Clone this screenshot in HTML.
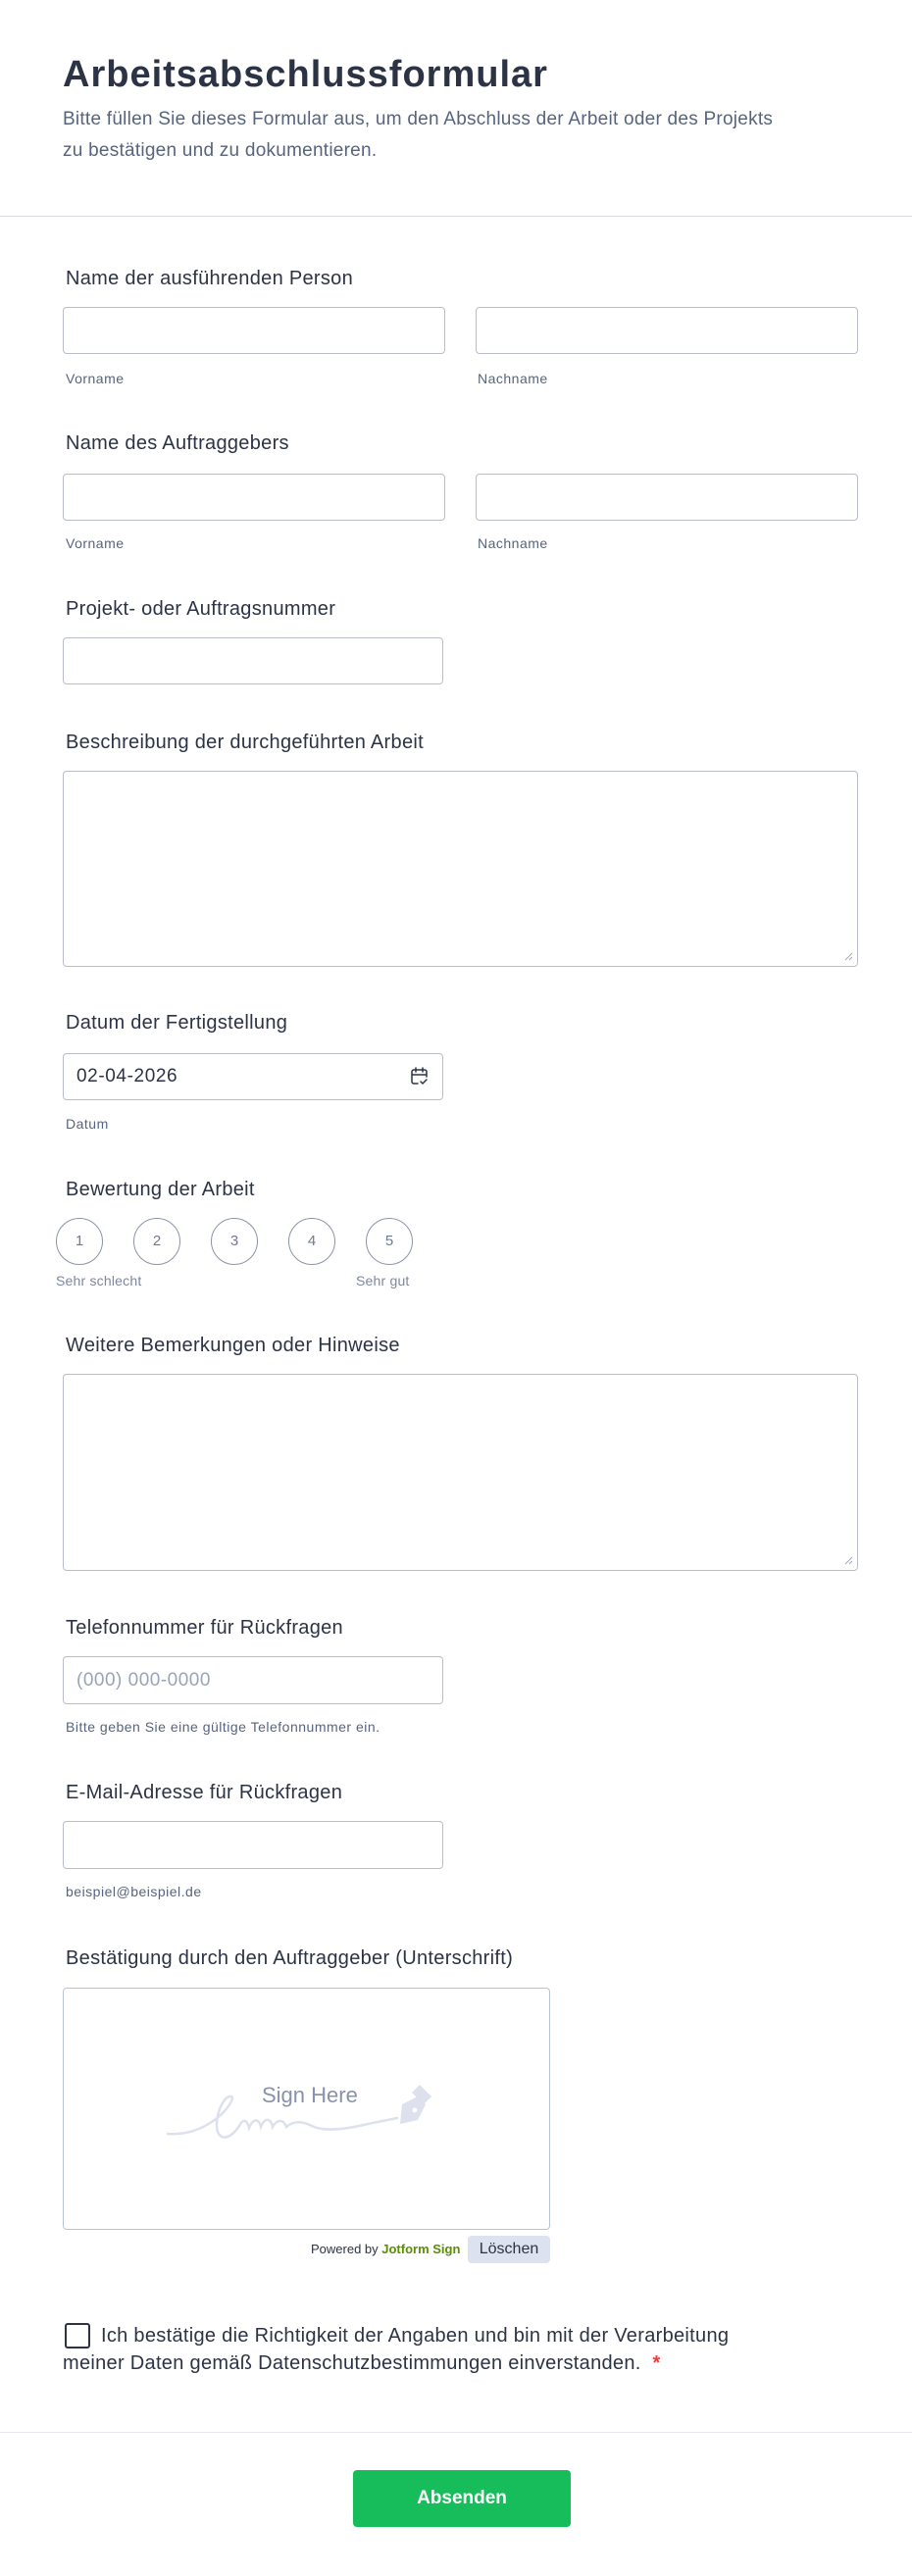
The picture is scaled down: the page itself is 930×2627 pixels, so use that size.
<!DOCTYPE html>
<html><head><meta charset="utf-8"><style>
*{box-sizing:border-box;margin:0;padding:0}
body{width:930px;height:2627px;background:#fff;font-family:"Liberation Sans",Arial,sans-serif;color:#2c3345;position:relative;overflow:hidden}
.a{position:absolute;white-space:nowrap}
.t{left:64px;font-size:38px;font-weight:700;letter-spacing:1px}
.sub{left:64px;font-size:19px;color:#57647e;line-height:32px;letter-spacing:0.25px}
.lbl{left:67px;font-size:20px;letter-spacing:0.3px;line-height:24px}
.sl{font-size:14px;color:#57647e;letter-spacing:0.5px;line-height:18px}
.in{position:absolute;border:1px solid #b8bdc9;border-radius:4px;background:#fff}
.c{position:absolute;width:48px;height:48px;border:1px solid #8c94aa;border-radius:50%;font-size:15px;color:#6f7a94;text-align:center;line-height:46px;top:1242px}
.hr{position:absolute;left:0;width:930px;height:1px;background:#d8dbe3}
</style></head><body>
<div class="a t" style="top:52px;line-height:48px">Arbeitsabschlussformular</div>
<div class="a sub" style="top:106px">Bitte füllen Sie dieses Formular aus, um den Abschluss der Arbeit oder des Projekts</div>
<div class="a sub" style="top:138px">zu bestätigen und zu dokumentieren.</div>
<div class="hr" style="top:220px"></div>

<div class="a lbl" style="top:272px">Name der ausführenden Person</div>
<div class="in" style="left:64px;top:313px;width:390px;height:48px"></div>
<div class="in" style="left:485px;top:313px;width:390px;height:48px"></div>
<div class="a sl" style="left:67px;top:377px">Vorname</div>
<div class="a sl" style="left:487px;top:377px">Nachname</div>

<div class="a lbl" style="top:440px">Name des Auftraggebers</div>
<div class="in" style="left:64px;top:483px;width:390px;height:48px"></div>
<div class="in" style="left:485px;top:483px;width:390px;height:48px"></div>
<div class="a sl" style="left:67px;top:545px">Vorname</div>
<div class="a sl" style="left:487px;top:545px">Nachname</div>

<div class="a lbl" style="top:609px">Projekt- oder Auftragsnummer</div>
<div class="in" style="left:64px;top:650px;width:388px;height:48px"></div>

<div class="a lbl" style="top:745px">Beschreibung der durchgeführten Arbeit</div>
<div class="in" style="left:64px;top:786px;width:811px;height:200px"></div>
<svg class="a" style="left:860px;top:970px" width="10" height="10"><path d="M9 2L2 9M9 6L6 9" stroke="#aab" stroke-width="1"/></svg>

<div class="a lbl" style="top:1031px">Datum der Fertigstellung</div>
<div class="in" style="left:64px;top:1074px;width:388px;height:48px"></div>
<div class="a" style="left:78px;top:1086px;font-size:19px;letter-spacing:0.6px;line-height:24px">02-04-2026</div>
<svg class="a" style="left:417px;top:1087px" width="22" height="22" viewBox="0 0 22 22" fill="none" stroke="#2c3345" stroke-width="1.5" stroke-linecap="round"><path d="M9 18H5a2 2 0 0 1-2-2V6a2 2 0 0 1 2-2h11a2 2 0 0 1 2 2v5M3 9h15M7 2v4M14 2v4M12 16l2 2 4-4"/></svg>
<div class="a sl" style="left:67px;top:1137px">Datum</div>

<div class="a lbl" style="top:1201px">Bewertung der Arbeit</div>
<div class="c" style="left:57px">1</div>
<div class="c" style="left:136px">2</div>
<div class="c" style="left:215px">3</div>
<div class="c" style="left:294px">4</div>
<div class="c" style="left:373px">5</div>
<div class="a sl" style="left:57px;top:1297px;color:#7d879e;letter-spacing:0.2px">Sehr schlecht</div>
<div class="a sl" style="left:363px;top:1297px;color:#7d879e;letter-spacing:0.2px">Sehr gut</div>

<div class="a lbl" style="top:1360px">Weitere Bemerkungen oder Hinweise</div>
<div class="in" style="left:64px;top:1401px;width:811px;height:201px"></div>
<svg class="a" style="left:860px;top:1586px" width="10" height="10"><path d="M9 2L2 9M9 6L6 9" stroke="#aab" stroke-width="1"/></svg>

<div class="a lbl" style="top:1648px">Telefonnummer für Rückfragen</div>
<div class="in" style="left:64px;top:1689px;width:388px;height:49px"></div>
<div class="a" style="left:78px;top:1702px;font-size:19px;letter-spacing:0.5px;color:#9aa3b8;line-height:24px">(000) 000-0000</div>
<div class="a sl" style="left:67px;top:1752px">Bitte geben Sie eine gültige Telefonnummer ein.</div>

<div class="a lbl" style="top:1816px">E-Mail-Adresse für Rückfragen</div>
<div class="in" style="left:64px;top:1857px;width:388px;height:49px"></div>
<div class="a sl" style="left:67px;top:1920px">beispiel@beispiel.de</div>

<div class="a lbl" style="top:1985px">Bestätigung durch den Auftraggeber (Unterschrift)</div>
<div class="in" style="left:64px;top:2027px;width:497px;height:247px;border-color:#b8c3da"></div>
<div class="a" style="left:267px;top:2124px;font-size:22px;color:#8992ab;line-height:26px">Sign Here</div>
<svg class="a" style="left:160px;top:2120px" width="300" height="70" viewBox="160 2120 300 70" fill="none" stroke="#dde1ee" stroke-width="2.5" stroke-linecap="round">
<path d="M171 2176C195 2178 215 2167 228 2154C236 2145 240 2137 234 2138C226 2140 218 2162 222 2174C226 2184 236 2180 244 2168C248 2160 252 2162 254 2170C258 2160 264 2160 266 2169C270 2159 276 2160 278 2169C283 2160 290 2162 292 2169C300 2162 310 2164 318 2168C330 2174 350 2172 375 2166L405 2160"/>
<path d="M420 2134l8 -8 12 12-8 8zM410 2146l16 -8 8 8-8 16-18 4z" fill="#dde1ee" stroke="none"/>
<circle cx="423" cy="2152" r="2.5" fill="#fff" stroke="none"/>
</svg>
<div class="a" style="left:317px;top:2286px;font-size:13px;color:#2c3345;line-height:16px">Powered by <b style="color:#5b8f00">Jotform Sign</b></div>
<div class="a" style="left:477px;top:2280px;width:84px;height:28px;background:#dde2f1;border-radius:4px;font-size:16px;text-align:center;line-height:28px">Löschen</div>

<div class="a" style="left:66px;top:2369px;width:26px;height:26px;border:2px solid #2c3345;border-radius:3px"></div>
<div class="a" style="left:103px;top:2370px;font-size:20px;letter-spacing:0.3px;line-height:24px">Ich bestätige die Richtigkeit der Angaben und bin mit der Verarbeitung</div>
<div class="a" style="left:64px;top:2398px;font-size:20px;letter-spacing:0.3px;line-height:24px">meiner Daten gemäß Datenschutzbestimmungen einverstanden. <span style="color:#f23a3c;font-weight:700;margin-left:6px">*</span></div>

<div class="hr" style="top:2480px;background:#e6e8ee"></div>
<div class="a" style="left:360px;top:2519px;width:222px;height:58px;background:#18bd5b;border-radius:4px;color:#fff;font-size:19px;font-weight:700;text-align:center;line-height:58px">Absenden</div>
</body></html>
